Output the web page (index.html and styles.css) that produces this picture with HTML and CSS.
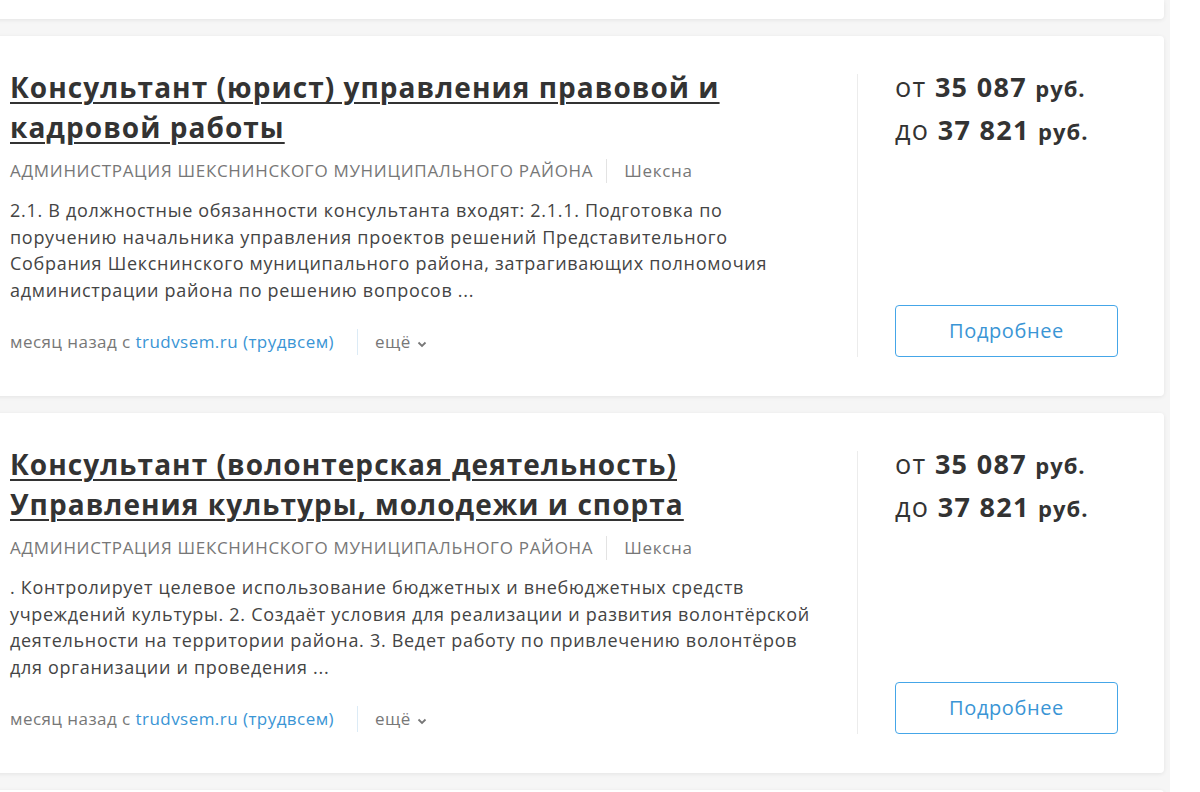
FILE: index.html
```html
<html>
<head>
    <meta http-equiv="content-type" content="text/html; charset=UTF-8">
    <title>Вакансии — Шексна</title>
    <link rel="stylesheet" href="styles.css">
</head>
<body>
    <div class="list">

        <div class="card card-prev"></div>

        <div class="card">
            <div class="main">
                <a class="title" href="#">Консультант (юрист) управления правовой и кадровой работы</a>
                <div class="company">
                    <span>АДМИНИСТРАЦИЯ ШЕКСНИНСКОГО МУНИЦИПАЛЬНОГО РАЙОНА</span>
                    <span class="city">Шексна</span>
                </div>
                <div class="description">
                    2.1. В должностные обязанности консультанта входят: 2.1.1. Подготовка по поручению начальника управления проектов решений Представительного Собрания Шекснинского муниципального района, затрагивающих полномочия администрации района по решению вопросов ...
                </div>
                <div class="meta">
                    <span class="source">месяц назад с <a href="#">trudvsem.ru (трудвсем)</a></span>
                    <span class="more">ещё
                        <svg width="10" height="7" viewBox="0 0 10 7"><path d="M1.5 1.5 L5 5 L8.5 1.5" fill="none" stroke="#777" stroke-width="1.8"/></svg>
                    </span>
                </div>
            </div>
            <div class="side">
                <div class="price">
                    <div>от <b>35 087</b> <b class="cur">руб.</b></div>
                    <div>до <b>37 821</b> <b class="cur">руб.</b></div>
                </div>
                <a class="button" href="#">Подробнее</a>
            </div>
        </div>

        <div class="card">
            <div class="main">
                <a class="title" href="#">Консультант (волонтерская деятельность) Управления культуры, молодежи и спорта</a>
                <div class="company">
                    <span>АДМИНИСТРАЦИЯ ШЕКСНИНСКОГО МУНИЦИПАЛЬНОГО РАЙОНА</span>
                    <span class="city">Шексна</span>
                </div>
                <div class="description">
                    . Контролирует целевое использование бюджетных и внебюджетных средств учреждений культуры. 2. Создаёт условия для реализации и развития волонтёрской деятельности на территории района. 3. Ведет работу по привлечению волонтёров для организации и проведения ...
                </div>
                <div class="meta">
                    <span class="source">месяц назад с <a href="#">trudvsem.ru (трудвсем)</a></span>
                    <span class="more">ещё
                        <svg width="10" height="7" viewBox="0 0 10 7"><path d="M1.5 1.5 L5 5 L8.5 1.5" fill="none" stroke="#777" stroke-width="1.8"/></svg>
                    </span>
                </div>
            </div>
            <div class="side">
                <div class="price">
                    <div>от <b>35 087</b> <b class="cur">руб.</b></div>
                    <div>до <b>37 821</b> <b class="cur">руб.</b></div>
                </div>
                <a class="button" href="#">Подробнее</a>
            </div>
        </div>

        <div class="card card-next"></div>

    </div>
</body>
</html>
```

FILE: styles.css
```css
body {
    margin: 0;
    background-color: #fff;
    font-family: "Open Sans", "Noto Sans", sans-serif;
    color: #333;
    overflow: hidden;
}

a {
    text-decoration: none;
}

.list {
    width: 1190px;
    margin-left: -20px;
    background-color: #f6f6f6;
    display: flex;
    flex-direction: column;
    gap: 17px;
}

.card {
    width: 1184px;
    background-color: #fff;
    border-radius: 4px;
    box-shadow: 0 1px 4px rgba(0, 0, 0, 0.08);
    display: flex;
    box-sizing: border-box;
    height: 360px;
    padding: 31px 46px 39px 30px;
}

.card-prev {
    height: 19px;
    border-radius: 0 0 4px 4px;
    padding: 0;
}

.card-next {
    height: 20px;
    padding: 0;
}

.main {
    width: 847px;
    box-sizing: border-box;
    padding-right: 33px;
    padding-bottom: 2px;
    display: flex;
    flex-direction: column;
}

.title {
    font-size: 28px;
    font-weight: 700;
    line-height: 40px;
    letter-spacing: 1.05px;
    color: #333;
    text-decoration: underline;
    text-decoration-thickness: 2px;
    text-underline-offset: 4px;
}

.company {
    margin-top: 12px;
    font-size: 17px;
    line-height: 24px;
    letter-spacing: 0.7px;
    color: #777;
    display: flex;
}

.city {
    border-left: 1px solid #e3e3e3;
    margin-left: 13px;
    padding-left: 17px;
}

.description {
    margin-top: 14px;
    font-size: 18px;
    line-height: 26.7px;
    letter-spacing: 0.7px;
    color: #444;
}

.meta {
    margin-top: auto;
    font-size: 17px;
    line-height: 26px;
    letter-spacing: 0.45px;
    color: #777;
    display: flex;
}

.meta a {
    color: #3a95d5;
}

.more {
    margin-left: 23px;
    padding-left: 17px;
    border-left: 1px solid #dcebf6;
}

.more svg {
    margin-left: 1px;
}

.side {
    flex: 1;
    margin-top: 7px;
    border-left: 1px solid #ececec;
    padding-left: 37px;
    display: flex;
    flex-direction: column;
    justify-content: space-between;
}

.price {
    margin-top: -8px;
    font-size: 27px;
    line-height: 42px;
    letter-spacing: 1.3px;
    color: #333;
}

.price b {
    font-weight: 700;
}

.price .cur {
    font-size: 22px;
    letter-spacing: 1px;
}

.button {
    display: block;
    height: 52px;
    box-sizing: border-box;
    border: 1px solid #45a6e8;
    border-radius: 4px;
    color: #3a95d5;
    font-size: 20px;
    line-height: 50px;
    letter-spacing: 0.6px;
    text-align: center;
}
```
